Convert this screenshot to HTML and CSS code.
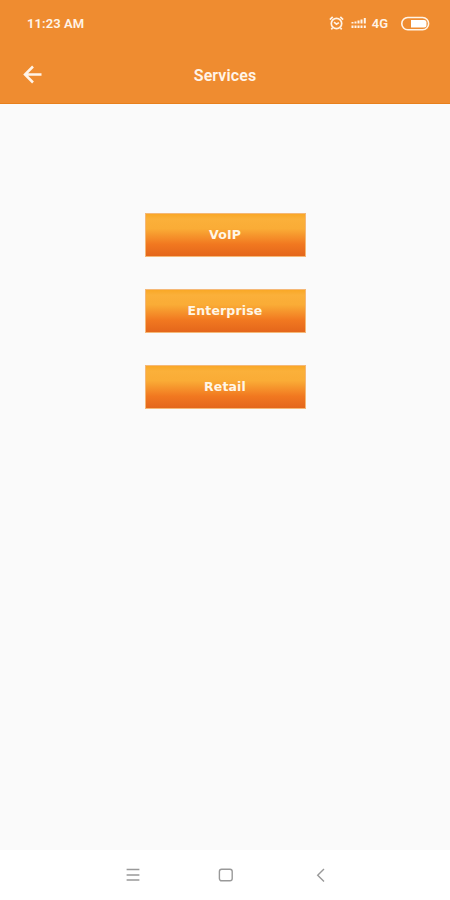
FILE: index.html
```html
<!DOCTYPE html>
<html lang="en">
<head>
    <meta charset="UTF-8">
    <meta name="viewport" content="width=device-width, initial-scale=1.0">
    <title>Services</title>
    <link rel="stylesheet" href="styles.css">
</head>
<body>
    <header class="header">
        <div class="status-bar">
            <span class="time">11:23 AM</span>
            <div class="status-icons">
                <svg class="alarm" width="16" height="16" viewBox="0 0 16 16">
                    <circle cx="7.5" cy="8.5" r="5.2"/>
                    <path d="M.9 4.6L3.7 1.8M14.1 4.6L11.3 1.8M3.5 13l-1.2 1.4M11.5 13l1.2 1.4M5 7.2L7.5 9.2l2.4-1.6"/>
                </svg>
                <svg class="signal" width="16" height="12" viewBox="0 0 16 12">
                    <path d="M1.5 11V8.5M4.5 11V8.5M7.5 11V8.5M10.5 11V8.5M13.8 11V8.5M1.5 6.5V5M4.5 6.5V4.5M7.5 6.5V3.5M10.5 6.5V2.5M13.8 6.5V1"/>
                </svg>
                <span class="network">4G</span>
                <svg class="battery" width="30" height="15" viewBox="0 0 30 15">
                    <rect class="case" x="1.8" y="1.5" width="26.8" height="12.2" rx="6"/>
                    <path class="level" d="M11 4h13a2.5 2.5 0 0 1 2.5 2.5v2.5a2.5 2.5 0 0 1-2.5 2.5h-13z"/>
                </svg>
            </div>
        </div>
        <div class="title-bar">
            <svg class="back" width="20" height="20" viewBox="0 0 20 20">
                <path d="M18.5 9.5H2.5M10 1.5L2 9.5l8 8"/>
            </svg>
            <h1>Services</h1>
        </div>
    </header>

    <main class="menu">
        <button class="btn">VoIP</button>
        <button class="btn">Enterprise</button>
        <button class="btn">Retail</button>
    </main>

    <footer class="nav-bar">
        <svg width="16" height="16" viewBox="0 0 16 16">
            <path d="M2.6 2.5h12.8M2.6 8h12.8M2.6 13h12.8"/>
        </svg>
        <svg width="16" height="16" viewBox="0 0 16 16">
            <rect x="1.4" y="2.2" width="12.8" height="11.6" rx="2.2"/>
        </svg>
        <svg width="16" height="16" viewBox="0 0 16 16">
            <path d="M12 2L5.7 8.2l6.3 6.2"/>
        </svg>
    </footer>
</body>
</html>
```
FILE: styles.css
```css
body {
    margin: 0;
    height: 900px;
    display: flex;
    flex-direction: column;
    background-color: #fafafa;
    font-family: Roboto, sans-serif;
    overflow: hidden;
}
.header {
    height: 104px;
    box-sizing: border-box;
    background-color: #ef8c30;
    border-bottom: 1px solid #e8801c;
    color: #fff4e8;
}
.status-bar {
    display: flex;
    align-items: center;
    justify-content: space-between;
    height: 46px;
    padding: 0 20px 0 27px;
}
.time {
    font-size: 13px;
    font-weight: 600;
    line-height: 16px;
    letter-spacing: 0.1px;
    margin-top: 2px;
}
.status-icons {
    display: flex;
    align-items: center;
}
.status-icons svg,
.back {
    fill: none;
    stroke: #fff4e8;
}
.alarm {
    stroke-width: 1.7;
    margin-right: 6px;
}
.signal {
    stroke-width: 2;
    margin-right: 5px;
}
.network {
    font-size: 13px;
    font-weight: 600;
    line-height: 16px;
    margin: 2px 12px 0 0;
}
.battery .case {
    stroke-width: 1.6;
}
.battery .level {
    fill: #fff;
    stroke: none;
}
.title-bar {
    display: grid;
    grid-template-columns: 20px 1fr 20px;
    align-items: center;
    height: 57px;
    padding: 0 23px;
}
.back {
    stroke-width: 2.5;
}
h1 {
    margin: 2px 0 0;
    text-align: center;
    font-size: 16px;
    line-height: 20px;
    font-weight: 600;
    letter-spacing: 0.1px;
}
.menu {
    flex: 1;
    display: flex;
    flex-direction: column;
    align-items: center;
    gap: 32px;
    padding-top: 109px;
}
.btn {
    width: 161px;
    height: 44px;
    padding: 0 0 2px;
    border: 1px solid #f5b877;
    background: linear-gradient(#f9a826, #fbb03a 12%, #faac36 35%, #f17820 72%, #e4661b);
    color: #fff6e6;
    font-family: "DejaVu Sans", sans-serif;
    font-size: 12.5px;
    font-weight: bold;
    letter-spacing: 0.15px;
}
.nav-bar {
    display: flex;
    justify-content: center;
    align-items: center;
    gap: 78px;
    height: 50px;
    padding-left: 1px;
    background-color: #fff;
}
.nav-bar svg {
    fill: none;
    stroke: #999;
    stroke-width: 1.4;
}
```
